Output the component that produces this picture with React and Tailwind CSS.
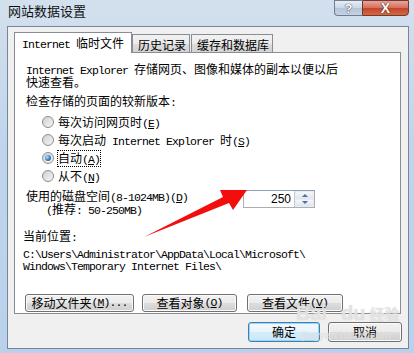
const M = ({ children }) => (
  <span className="font-['Liberation_Mono',monospace] text-[11.5px] tracking-[-0.9px]">{children}</span>
);

const btn =
  'flex items-center justify-center rounded-[3px] border border-[#707070] bg-[linear-gradient(#f2f2f2_0%,#ebebeb_50%,#dddddd_50%,#cfcfcf_100%)] shadow-[inset_0_0_0_1px_#fbfbfb] text-[12px] leading-[12px]';

function Radio({ checked, children, focus }) {
  return (
    <div className="flex h-[18px] items-center pl-[16px]">
      <span className="flex h-[12px] w-[12px] items-center justify-center rounded-full border border-[#8d8d8d] bg-[linear-gradient(135deg,#d0d0d0,#f6f6f6)]">
        {checked && (
          <span className="h-[6px] w-[6px] rounded-full bg-[radial-gradient(circle_at_35%_35%,#b9e3ff,#2c7ed0_55%,#124f96)]" />
        )}
      </span>
      <span className={`ml-[4px] leading-[13px] ${focus ? 'outline outline-1 outline-dotted outline-black' : ''}`}>
        {children}
      </span>
    </div>
  );
}

export default function App() {
  return (
    <div className="relative h-[353px] w-[414px] overflow-hidden bg-[linear-gradient(180deg,#d3e0ee,#c0d5ec_40%,#b9d1ec)] font-['Noto_Sans_CJK_SC',sans-serif] text-[12px] text-black">
      {/* title bar */}
      <div className="flex h-[26px] items-start">
        <div className="pl-[8px] pt-[3px] text-[13px] leading-[16px] text-[#111]">网站数据设置</div>
        <div className="ml-auto mr-[5px] flex">
          <div className="flex h-[16px] w-[28px] items-center justify-center rounded-bl-[4px] border border-r-0 border-[#6f7d8f] bg-[linear-gradient(#e6edf5,#cbd7e5_50%,#b4c5d9_50%,#c4d3e4)] font-['Liberation_Sans',sans-serif] text-[13px] font-bold leading-none text-white [text-shadow:0_0_1px_#2b3645,0_0_1px_#2b3645]">
            ?
          </div>
          <div className="flex h-[16px] w-[47px] items-center justify-center rounded-br-[4px] border border-[#6b3a33] bg-[linear-gradient(#e9a597,#d46f5c_50%,#c2432c_50%,#d6693f)] font-['Liberation_Sans',sans-serif] text-[14px] font-bold leading-none text-white [text-shadow:0_0_1px_#3a1a14,0_0_1px_#3a1a14]">
            X
          </div>
        </div>
      </div>

      {/* client area */}
      <div className="ml-[7px] mr-[5px] h-[323px] border border-[#7a8696] bg-[#f0f0f0] pl-[6px] pr-[7px] pt-[5px]">
        <div className="flex h-[21px] items-end">
          <div className="relative z-10 h-[21px] w-[118px] border border-b-0 border-[#898c95] bg-white pl-[7px] pt-[3px] leading-[14px]">
            <M>Internet </M>临时文件
          </div>
          <div className="h-[19px] w-[58px] border border-[#898c95] bg-[linear-gradient(#f2f2f2,#ebebeb_50%,#dddddd_50%,#d4d4d4)] pl-[5px] pt-[3px] leading-[14px]">
            历史记录
          </div>
          <div className="ml-px h-[19px] w-[82px] border border-[#898c95] bg-[linear-gradient(#f2f2f2,#ebebeb_50%,#dddddd_50%,#d4d4d4)] pl-[5px] pt-[3px] leading-[14px]">
            缓存和数据库
          </div>
        </div>

        <div className="-mt-px flex h-[262px] flex-col border border-[#898c95] bg-white pl-[11px]">
          <p className="mt-[10px] leading-[11px]">
            <M>Internet Explorer </M>存储网页、图像和媒体的副本以便以后
            <br />
            快速查看。
          </p>
          <div className="mt-[8px] leading-[12px]">
            检查存储的页面的较新版本<M>:</M>
          </div>
          <div className="mt-[4px]">
            <Radio>
              每次访问网页时<M>(<u>E</u>)</M>
            </Radio>
            <Radio>
              每次启动<M> Internet Explorer </M>时<M>(<u>S</u>)</M>
            </Radio>
            <Radio checked focus>
              自动<M>(<u>A</u>)</M>
            </Radio>
            <Radio>
              从不<M>(<u>N</u>)</M>
            </Radio>
          </div>

          <div className="mt-[5px] flex">
            <div className="w-[217px] leading-[11px]">
              <div>
                使用的磁盘空间<M>(8-1024MB)(<u>D</u>)</M>
              </div>
              <div className="pl-[20px]">
                <M>(</M>推荐<M>: 50-250MB)</M>
              </div>
            </div>
            <div className="flex h-[18px] w-[72px] border border-[#abadb3] border-t-[#8e9fb5] bg-white">
              <div className="flex-1 pr-[3px] text-right font-['Liberation_Sans',sans-serif] text-[12px] leading-[16px]">
                250
              </div>
              <div className="flex w-[20px] flex-col gap-px border-l border-[#c5cad3] bg-[#e8edf3] p-px">
                <div className="flex flex-1 items-center justify-center bg-[linear-gradient(#f4f6f9,#dfe5ec)]">
                  <span className="h-0 w-0 border-x-[3px] border-b-[3px] border-x-transparent border-b-[#4a6fa5]" />
                </div>
                <div className="flex flex-1 items-center justify-center bg-[linear-gradient(#f4f6f9,#dfe5ec)]">
                  <span className="h-0 w-0 border-x-[3px] border-t-[3px] border-x-transparent border-t-[#4a6fa5]" />
                </div>
              </div>
            </div>
          </div>

          <div className="-ml-[3px] mt-[14px] leading-[12px]">
            当前位置<M>:</M>
          </div>
          <div className="-ml-[3px] mt-[5px] font-['Liberation_Mono',monospace] text-[11.5px] leading-[12px] tracking-[-0.9px]">
            C:\Users\Administrator\AppData\Local\Microsoft\
            <br />
            Windows\Temporary Internet Files\
          </div>

          <div className="-ml-px mt-[21px] flex">
            <div className={`${btn} h-[18px] w-[109px]`}>
              移动文件夹<M>(<u>M</u>)...</M>
            </div>
            <div className={`${btn} ml-[8px] h-[18px] w-[95px]`}>
              查看对象<M>(<u>O</u>)</M>
            </div>
            <div className={`${btn} ml-[10px] h-[18px] w-[96px]`}>
              查看文件<M>(<u>V</u>)</M>
            </div>
          </div>
        </div>

        <div className="-mr-px mt-[8px] flex justify-end gap-[8px]">
          <div className="flex h-[20px] w-[72px] items-center justify-center rounded-[3px] border border-[#3c7fb1] bg-[linear-gradient(#f3f9fd_0%,#e6f4fc_50%,#d5edfa_50%,#c9e7f8_100%)] shadow-[inset_0_0_0_1px_#9fd3f2] leading-[12px]">
            确定
          </div>
          <div className={`${btn} h-[20px] w-[74px]`}>取消</div>
        </div>
      </div>

      {/* baidu watermark */}
      <div className="pointer-events-none absolute left-[296px] top-[303px] font-['Liberation_Sans',sans-serif] text-[20px] font-bold leading-none text-white/50 [text-shadow:0_0_1px_#c4c4c4]">
        Bai<span className="ml-[14px]">du</span>
        <span className="ml-[4px] font-['Noto_Sans_CJK_SC',sans-serif] text-[15px]">经验</span>
      </div>
      <div className="pointer-events-none absolute left-[302px] top-[330px] font-['Liberation_Sans',sans-serif] text-[11px] leading-none text-white/50 [text-shadow:0_0_1px_#c4c4c4]">
        jingyan.baidu.com
      </div>

      {/* red arrow annotation */}
      <svg className="pointer-events-none absolute left-0 top-0" width="414" height="353" viewBox="0 0 414 353">
        <polygon points="144,237 223,197 220,190 247,190 233,210 229,203" fill="#f40d0d" />
      </svg>
    </div>
  );
}
